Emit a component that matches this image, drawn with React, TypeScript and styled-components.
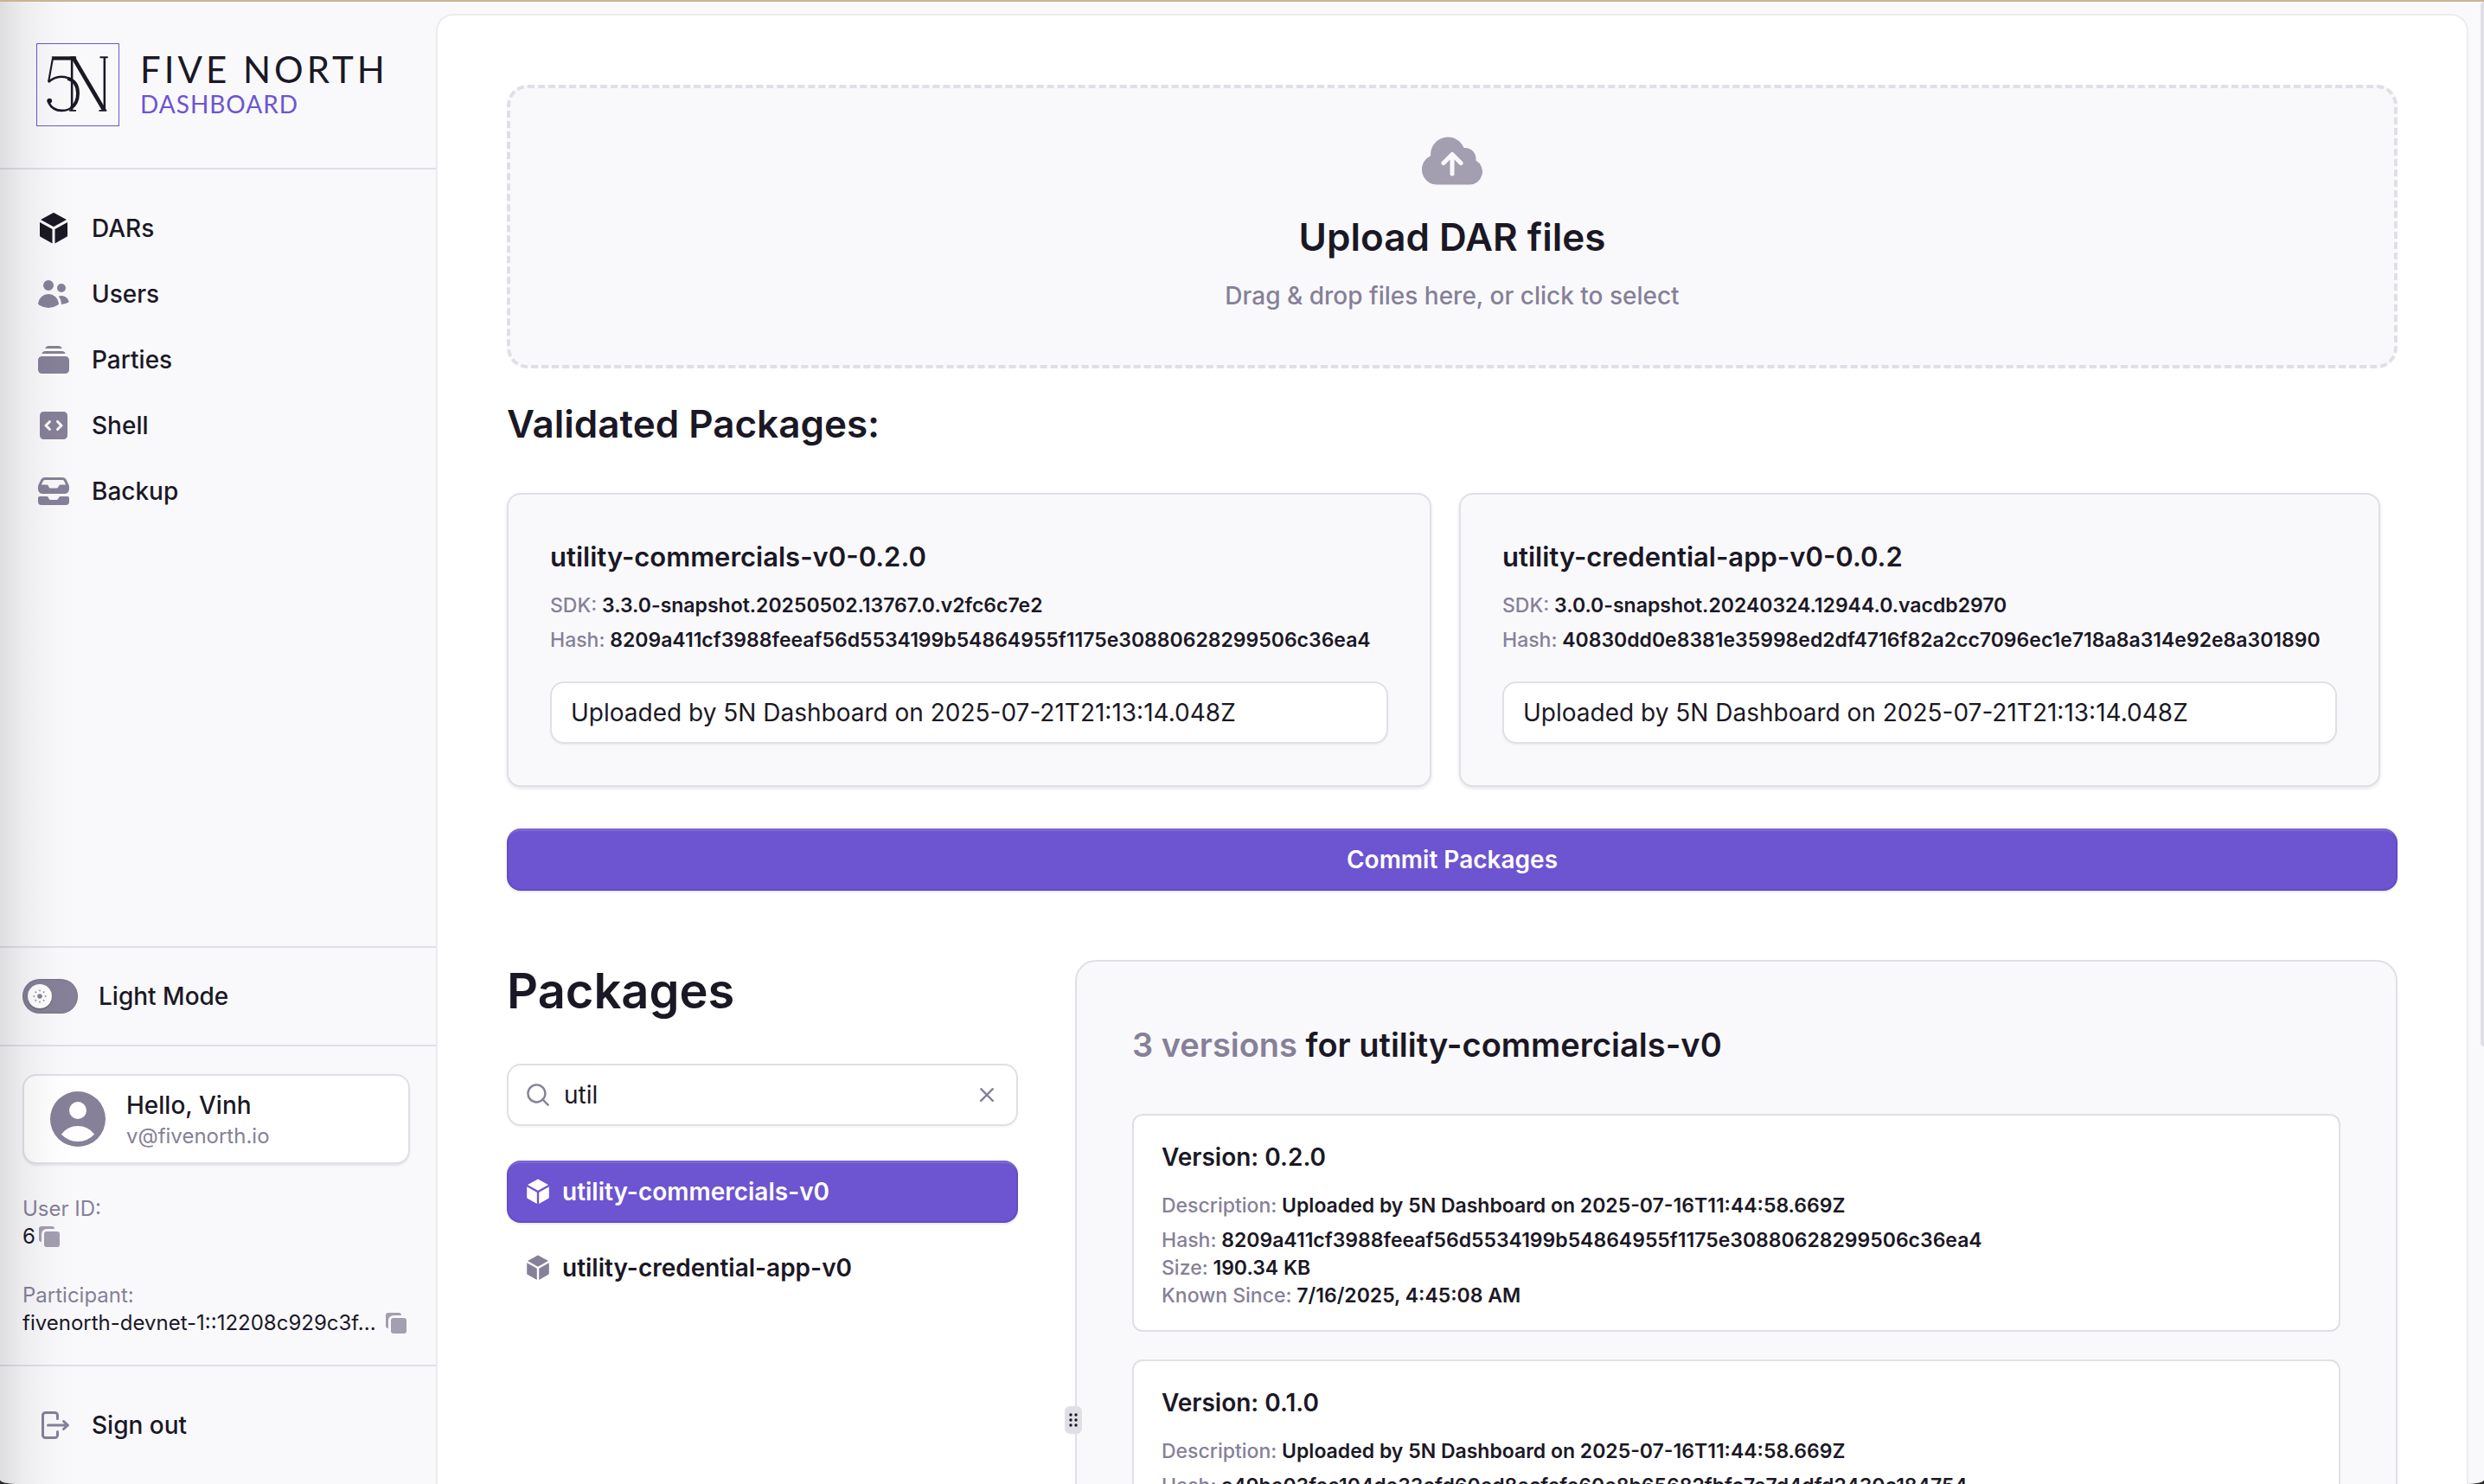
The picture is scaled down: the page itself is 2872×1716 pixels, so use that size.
import React, { useState } from "react";
import styled, { createGlobalStyle, css } from "styled-components";
import {
  HiMiniCube,
  HiMiniUsers,
  HiMiniRectangleStack,
  HiMiniCodeBracketSquare,
  HiMiniInboxStack,
  HiMiniArrowRightOnRectangle,
  HiMiniMagnifyingGlass,
  HiMiniXMark,
  HiMiniUserCircle,
  HiCloudArrowUp,
} from "react-icons/hi2";

const color = {
  ink: "#1b1825",
  muted: "#868098",
  soft: "#a39eb0",
  line: "#e1dfe6",
  hairline: "#ececee",
  surface: "#f9f9fc",
  white: "#ffffff",
  accent: "#6d54d0",
  sand: "#c8b494",
};

const GlobalStyle = createGlobalStyle`
  *, *::before, *::after { box-sizing: border-box; }
  body {
    margin: 0;
    background: #2b2b2b;
    color: ${color.ink};
    font-family: Inter, "Liberation Sans", sans-serif;
    font-size: 28px;
    line-height: 40px;
  }
  h1, h2, h3, p, dl, dd, ul { margin: 0; padding: 0; }
  ul { list-style: none; }
  button, input { font: inherit; color: inherit; }
  button { border: 0; background: none; padding: 0; cursor: pointer; }
  svg { display: block; flex: none; }
`;

const Shell = styled.div`
  position: relative;
  display: flex;
  height: 100vh;
  overflow: hidden;
  background: ${color.surface};
  border-top: 2px solid ${color.sand};
  border-radius: 0 0 18px 18px / 0 0 5px 5px;
`;

const EdgeShade = styled.div`
  position: absolute;
  inset: 0 auto 0 0;
  width: 88px;
  pointer-events: none;
  background: linear-gradient(
    to right,
    rgba(0, 0, 0, 0.11),
    rgba(0, 0, 0, 0.05) 30%,
    rgba(0, 0, 0, 0.01) 70%,
    transparent
  );
`;

const PageScroll = styled.div`
  position: absolute;
  inset: 0 0 auto auto;
  width: 4px;
  height: 1208px;
  border-radius: 4px 0 0 4px;
  background: ${color.line};
`;

const Sidebar = styled.aside`
  display: flex;
  flex-direction: column;
  flex: none;
  width: 504px;
`;

const Brand = styled.header`
  display: flex;
  align-items: center;
  gap: 24px;
  padding: 48px 42px;
  border-bottom: 2px solid ${color.line};
`;

const BrandMark = styled.svg`
  border: 1px solid ${color.accent};
`;

const BrandText = styled.div`
  display: flex;
  flex-direction: column;
  padding-bottom: 4px;
  font-family: Lato, "Open Sans", sans-serif;
  white-space: nowrap;
`;

const BrandName = styled.span`
  font-size: 42px;
  line-height: 48px;
  letter-spacing: 4px;
`;

const BrandSub = styled.span`
  font-size: 28px;
  line-height: 32px;
  letter-spacing: 1px;
  color: ${color.accent};
`;

const Nav = styled.nav`
  display: flex;
  flex-direction: column;
  flex: 1;
  gap: 4px;
  padding: 32px 26px;
`;

const itemStyle = css`
  display: flex;
  align-items: center;
  gap: 24px;
  height: 72px;
  padding: 0 16px;
  font-weight: 500;
  color: ${color.ink};
  text-decoration: none;
`;

const NavLink = styled.a<{ $active?: boolean }>`
  ${itemStyle}
  svg { color: ${(p) => (p.$active ? color.ink : color.muted)}; }
`;

const SignOutButton = styled.button`
  ${itemStyle}
  width: 100%;
  svg { color: ${color.muted}; }
`;

const SideSection = styled.section<{ $pad: number }>`
  padding: ${(p) => p.$pad}px 30px ${(p) => p.$pad}px 26px;
  border-top: 2px solid ${color.line};
`;

const SwitchRow = styled.label`
  display: flex;
  align-items: center;
  gap: 24px;
  font-weight: 500;
  cursor: pointer;
`;

const SwitchTrack = styled.span`
  position: relative;
  display: flex;
  align-items: center;
  width: 64px;
  height: 40px;
  padding: 0 6px;
  border-radius: 20px;
  background: ${color.muted};
  box-shadow: inset 0 0 2px rgba(0, 0, 0, 0.3);
`;

const SwitchInput = styled.input`
  position: absolute;
  inset: 0;
  width: 100%;
  height: 100%;
  margin: 0;
  opacity: 0;
`;

const SwitchKnob = styled.span`
  display: grid;
  place-items: center;
  width: 28px;
  height: 28px;
  border-radius: 50%;
  background: ${color.white};
  color: ${color.muted};
  box-shadow: 0 1px 2px rgba(0, 0, 0, 0.3);
`;

const UserCard = styled.div`
  display: flex;
  align-items: center;
  gap: 16px;
  height: 104px;
  padding: 0 22px;
  border: 2px solid ${color.line};
  border-radius: 16px;
  background: ${color.white};
  box-shadow: 0 2px 2px rgba(0, 0, 0, 0.08);
  > svg { color: ${color.muted}; }
`;

const UserText = styled.div`
  display: flex;
  flex-direction: column;
  font-weight: 500;
`;

const UserMail = styled.span`
  font-size: 24px;
  font-weight: 400;
  line-height: 32px;
  color: ${color.muted};
`;

const IdBlock = styled.div`
  margin-top: 36px;
  font-size: 24px;
  line-height: 32px;
`;

const IdLabel = styled.p`
  color: ${color.muted};
`;

const IdValue = styled.p<{ $spread?: boolean }>`
  display: flex;
  align-items: center;
  justify-content: ${(p) => (p.$spread ? "space-between" : "flex-start")};
  span {
    overflow: hidden;
    text-overflow: ellipsis;
    white-space: nowrap;
  }
`;

const CopyButton = styled.button`
  flex: none;
  color: ${color.soft};
`;

const Main = styled.main`
  flex: 1;
  min-width: 0;
  margin: 14px 18px 0 0;
  padding: 80px;
  overflow: hidden;
  border: 2px solid ${color.hairline};
  border-bottom: 0;
  border-radius: 20px 20px 0 0;
  background: ${color.white};
`;

const DropZone = styled.button`
  display: flex;
  flex-direction: column;
  align-items: center;
  gap: 20px;
  width: 100%;
  padding: 44px 0 60px;
  border: 4px dashed ${color.line};
  border-radius: 24px;
  background: ${color.surface};
  svg { color: ${color.soft}; }
`;

const DropTitle = styled.span`
  font-size: 44px;
  font-weight: 600;
  line-height: 56px;
`;

const DropHint = styled.span`
  font-weight: 500;
  color: ${color.muted};
`;

const SectionTitle = styled.h2`
  margin: 32px 0 48px;
  font-size: 44px;
  font-weight: 600;
  line-height: 64px;
`;

const ValidatedGrid = styled.div`
  display: grid;
  grid-template-columns: 1069fr 1065fr;
  gap: 32px;
  margin-right: 20px;
`;

const ValidatedCard = styled.article`
  min-width: 0;
  padding: 48px;
  border: 2px solid ${color.line};
  border-radius: 16px;
  background: ${color.surface};
  box-shadow: 0 2px 4px rgba(0, 0, 0, 0.1);
`;

const CardTitle = styled.h3`
  margin-bottom: 16px;
  font-size: 31px;
  font-weight: 600;
  line-height: 48px;
`;

const Fact = styled.p<{ $gap?: number }>`
  margin-bottom: ${(p) => p.$gap ?? 0}px;
  font-size: 23px;
  font-weight: 600;
  line-height: 32px;
  white-space: nowrap;
  span {
    font-weight: 500;
    color: ${color.muted};
  }
`;

const TextField = styled.input`
  display: block;
  width: 100%;
  height: 72px;
  padding: 0 22px;
  border: 2px solid ${color.line};
  border-radius: 16px;
  background: ${color.white};
  box-shadow: 0 2px 2px rgba(0, 0, 0, 0.04);
  outline: 0;
`;

const accentFill = css`
  background: ${color.accent};
  color: ${color.white};
  box-shadow:
    inset 0 0 0 2px rgba(60, 30, 150, 0.15),
    inset 0 4px 0 -1px rgba(255, 255, 255, 0.16),
    0 2px 2px rgba(0, 0, 0, 0.08);
`;

const CommitButton = styled.button`
  ${accentFill}
  display: block;
  width: 100%;
  height: 72px;
  margin: 48px 0 80px;
  border-radius: 16px;
  font-weight: 600;
`;

const Split = styled.div`
  display: grid;
  grid-template-columns: 591fr 66px 1529fr;
`;

const PackagesTitle = styled.h1`
  margin-bottom: 48px;
  font-size: 56px;
  font-weight: 600;
  line-height: 72px;
`;

const SearchBox = styled.div`
  display: flex;
  align-items: center;
  gap: 14px;
  height: 72px;
  margin-bottom: 40px;
  padding: 0 18px;
  border: 2px solid ${color.line};
  border-radius: 16px;
  background: ${color.white};
  box-shadow: 0 2px 2px rgba(0, 0, 0, 0.04);
  svg { color: ${color.muted}; }
`;

const SearchInput = styled.input`
  flex: 1;
  min-width: 0;
  padding: 0;
  border: 0;
  outline: 0;
  background: none;
`;

const PackageList = styled.ul`
  display: flex;
  flex-direction: column;
  gap: 16px;
`;

const PackageButton = styled.button<{ $active: boolean }>`
  display: flex;
  align-items: center;
  gap: 12px;
  width: 100%;
  height: 72px;
  padding: 0 20px;
  border-radius: 16px;
  font-weight: 600;
  svg { color: ${(p) => (p.$active ? color.white : color.muted)}; }
  ${(p) => p.$active && accentFill}
`;

const Gutter = styled.div`
  position: relative;
`;

const Grip = styled.button`
  position: absolute;
  top: 516px;
  right: -8px;
  z-index: 1;
  display: grid;
  place-items: center;
  width: 20px;
  height: 32px;
  border-radius: 6px;
  background: ${color.line};
`;

const VersionPanel = styled.section`
  display: flex;
  flex-direction: column;
  gap: 32px;
  min-width: 0;
  padding: 64px;
  border: 2px solid ${color.line};
  border-radius: 24px;
  background: ${color.surface};
`;

const VersionHeading = styled.h2`
  margin-bottom: 16px;
  font-size: 38px;
  font-weight: 600;
  line-height: 64px;
  span { color: ${color.muted}; }
`;

const VersionCard = styled.article`
  padding: 32px 32px 24px;
  border: 2px solid ${color.line};
  border-radius: 12px;
  background: ${color.white};
`;

const VersionName = styled.h3`
  margin-bottom: 24px;
  font-size: 28px;
  font-weight: 600;
  line-height: 32px;
`;

function LogoMark() {
  return (
    <BrandMark width="96" height="96" viewBox="0 0 96 96" fill="none" stroke={color.ink} role="img" aria-label="Five North">
      <path d="M17 14.500H46V19H19Z" fill={color.ink} stroke="none" />
      <path d="M18.500 16L13.500 44" strokeWidth="2.200" />
      <path d="M13 45C18 40.500 22 38.500 28 38.500C40 38.500 48 46 48 58C48 70 41 78.500 29 78.500C21 78.500 16 74 13.500 69" strokeWidth="2.600" />
      <path d="M36 40.500C44 43 48 49.500 48 58C48 66 45 72 40 75.500" strokeWidth="4" />
      <circle cx="14.500" cy="67" r="3" fill={color.ink} stroke="none" />
      <path d="M41 18V78M79.500 16V78" strokeWidth="2.600" />
      <path d="M39 14.500H44.500L82 78.500H76.500Z" fill={color.ink} stroke="none" />
      <path d="M38 78.500H46M74 15.500H83.500M73 78.500H82" strokeWidth="2" />
    </BrandMark>
  );
}

function CopyIcon() {
  return (
    <svg width="32" height="32" viewBox="0 0 16 16" fill="currentColor" aria-hidden="true">
      <path d="M5 6.500A1.500 1.500 0 0 1 6.500 5h6A1.500 1.500 0 0 1 14 6.500v6a1.500 1.500 0 0 1-1.500 1.500h-6A1.500 1.500 0 0 1 5 12.500v-6Z" />
      <path d="M3.500 2A1.500 1.500 0 0 0 2 3.500v6A1.500 1.500 0 0 0 3.500 11V6.500a3 3 0 0 1 3-3H11A1.500 1.500 0 0 0 9.500 2h-6Z" />
    </svg>
  );
}

const RAYS = [0, 45, 90, 135, 180, 225, 270, 315];

function SunIcon() {
  return (
    <svg width="16" height="16" viewBox="0 0 16 16" fill="currentColor" aria-hidden="true">
      <circle cx="8" cy="8" r="2.800" />
      {RAYS.map((angle) => (
        <rect key={angle} x="7.300" y="0.300" width="1.400" height="2.200" rx="0.700" transform={`rotate(${angle} 8 8)`} />
      ))}
    </svg>
  );
}

function GripIcon() {
  return (
    <svg width="10" height="16" viewBox="0 0 10 16" fill={color.ink} aria-hidden="true">
      {[2, 8, 14].map((y) => (
        <React.Fragment key={y}>
          <circle cx="2" cy={y} r="1.700" />
          <circle cx="8" cy={y} r="1.700" />
        </React.Fragment>
      ))}
    </svg>
  );
}

const NAV = [
  { label: "DARs", Icon: HiMiniCube },
  { label: "Users", Icon: HiMiniUsers },
  { label: "Parties", Icon: HiMiniRectangleStack },
  { label: "Shell", Icon: HiMiniCodeBracketSquare },
  { label: "Backup", Icon: HiMiniInboxStack },
];

const VALIDATED = [
  {
    name: "utility-commercials-v0-0.2.0",
    sdk: "3.3.0-snapshot.20250502.13767.0.v2fc6c7e2",
    hash: "8209a411cf3988feeaf56d5534199b54864955f1175e30880628299506c36ea4",
  },
  {
    name: "utility-credential-app-v0-0.0.2",
    sdk: "3.0.0-snapshot.20240324.12944.0.vacdb2970",
    hash: "40830dd0e8381e35998ed2df4716f82a2cc7096ec1e718a8a314e92e8a301890",
  },
];

const PACKAGES = ["utility-commercials-v0", "utility-credential-app-v0"];

const VERSIONS = [
  {
    version: "0.2.0",
    hash: "8209a411cf3988feeaf56d5534199b54864955f1175e30880628299506c36ea4",
    size: "190.34 KB",
    since: "7/16/2025, 4:45:08 AM",
  },
  {
    version: "0.1.0",
    hash: "a49be03fee104de33efd60ed8ecfefe60e8b65682fbfc7e7d4dfd2430c184754",
  },
];

export default function App() {
  const [query, setQuery] = useState("util");
  const [active, setActive] = useState(PACKAGES[0]);

  return (
    <>
      <GlobalStyle />
      <Shell>
        <Sidebar>
          <Brand>
            <LogoMark />
            <BrandText>
              <BrandName>FIVE NORTH</BrandName>
              <BrandSub>DASHBOARD</BrandSub>
            </BrandText>
          </Brand>
          <Nav>
            {NAV.map(({ label, Icon }, i) => (
              <NavLink key={label} href="#" $active={i === 0}>
                <Icon size={40} />
                {label}
              </NavLink>
            ))}
          </Nav>
          <SideSection $pad={36}>
            <SwitchRow>
              <SwitchTrack>
                <SwitchInput type="checkbox" role="switch" />
                <SwitchKnob>
                  <SunIcon />
                </SwitchKnob>
              </SwitchTrack>
              Light Mode
            </SwitchRow>
          </SideSection>
          <SideSection $pad={32}>
            <UserCard>
              <HiMiniUserCircle size={80} />
              <UserText>
                Hello, Vinh
                <UserMail>v@fivenorth.io</UserMail>
              </UserText>
            </UserCard>
            <IdBlock>
              <IdLabel>User ID:</IdLabel>
              <IdValue>
                <span>6</span>
                <CopyButton aria-label="Copy user ID">
                  <CopyIcon />
                </CopyButton>
              </IdValue>
            </IdBlock>
            <IdBlock>
              <IdLabel>Participant:</IdLabel>
              <IdValue $spread>
                <span>fivenorth-devnet-1::12208c929c3f...</span>
                <CopyButton aria-label="Copy participant">
                  <CopyIcon />
                </CopyButton>
              </IdValue>
            </IdBlock>
          </SideSection>
          <SideSection $pad={32}>
            <SignOutButton>
              <HiMiniArrowRightOnRectangle size={40} />
              Sign out
            </SignOutButton>
          </SideSection>
        </Sidebar>

        <Main>
          <DropZone>
            <HiCloudArrowUp size={80} />
            <DropTitle>Upload DAR files</DropTitle>
            <DropHint>Drag &amp; drop files here, or click to select</DropHint>
          </DropZone>

          <SectionTitle>Validated Packages:</SectionTitle>
          <ValidatedGrid>
            {VALIDATED.map((pkg) => (
              <ValidatedCard key={pkg.name}>
                <CardTitle>{pkg.name}</CardTitle>
                <Fact $gap={8}>
                  <span>SDK:</span> {pkg.sdk}
                </Fact>
                <Fact $gap={32}>
                  <span>Hash:</span> {pkg.hash}
                </Fact>
                <TextField
                  aria-label={`Description of ${pkg.name}`}
                  defaultValue="Uploaded by 5N Dashboard on 2025-07-21T21:13:14.048Z"
                />
              </ValidatedCard>
            ))}
          </ValidatedGrid>
          <CommitButton>Commit Packages</CommitButton>

          <Split>
            <div>
              <PackagesTitle>Packages</PackagesTitle>
              <SearchBox>
                <HiMiniMagnifyingGlass size={32} />
                <SearchInput aria-label="Search packages" value={query} onChange={(e) => setQuery(e.target.value)} />
                <button aria-label="Clear search" onClick={() => setQuery("")}>
                  <HiMiniXMark size={32} />
                </button>
              </SearchBox>
              <PackageList>
                {PACKAGES.filter((name) => name.includes(query)).map((name) => (
                  <li key={name}>
                    <PackageButton $active={name === active} onClick={() => setActive(name)}>
                      <HiMiniCube size={32} />
                      {name}
                    </PackageButton>
                  </li>
                ))}
              </PackageList>
            </div>
            <Gutter>
              <Grip aria-label="Resize panels">
                <GripIcon />
              </Grip>
            </Gutter>
            <VersionPanel>
              <VersionHeading>
                <span>3 versions</span> for utility-commercials-v0
              </VersionHeading>
              {VERSIONS.map((v) => (
                <VersionCard key={v.version}>
                  <VersionName>Version: {v.version}</VersionName>
                  <Fact $gap={8}>
                    <span>Description:</span> Uploaded by 5N Dashboard on 2025-07-16T11:44:58.669Z
                  </Fact>
                  <Fact>
                    <span>Hash:</span> {v.hash}
                  </Fact>
                  {v.size && (
                    <Fact>
                      <span>Size:</span> {v.size}
                    </Fact>
                  )}
                  {v.since && (
                    <Fact>
                      <span>Known Since:</span> {v.since}
                    </Fact>
                  )}
                </VersionCard>
              ))}
            </VersionPanel>
          </Split>
        </Main>
        <EdgeShade />
        <PageScroll />
      </Shell>
    </>
  );
}
